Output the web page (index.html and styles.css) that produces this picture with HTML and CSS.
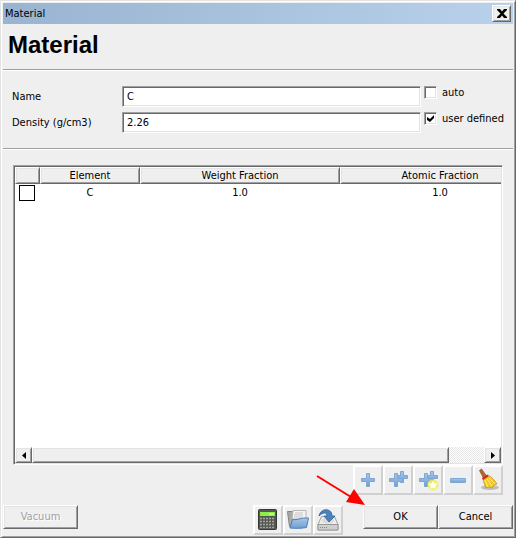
FILE: index.html
```html
<!DOCTYPE html>
<html lang="en">
<head>
<meta charset="utf-8">
<title>Material</title>
<link rel="stylesheet" href="styles.css">
</head>
<body>
<main class="dialog">
  <header class="titlebar">
    <span>Material</span>
    <button class="close" aria-label="Close"><svg width="10" height="9" viewBox="0 0 10 9"><path d="M0 0h3l2 2.500L7 0h3v1L6.500 4.500 10 8v1H7L5 6.500 3 9H0V8l3.500-3.500L0 1z"/></svg></button>
  </header>
  <h1>Material</h1>
  <hr>
  <form class="fields">
    <label class="caption" for="name">Name</label>
    <input class="text" id="name" type="text" value="C">
    <label class="option"><input class="check" type="checkbox"><span>auto</span></label>
    <label class="caption" for="density">Density (g/cm3)</label>
    <input class="text" id="density" type="text" value="2.26">
    <label class="option"><input class="check" type="checkbox" checked><span>user defined</span></label>
  </form>
  <hr>
  <section class="composition">
    <div class="list">
      <div class="viewport">
        <table>
          <colgroup><col class="c-check"><col class="c-element"><col class="c-fraction"><col class="c-fraction"></colgroup>
          <thead><tr><th></th><th>Element</th><th>Weight Fraction</th><th>Atomic Fraction</th></tr></thead>
          <tbody><tr><td class="pick"><input class="row-check" type="checkbox" aria-label="Select C"></td><td>C</td><td>1.0</td><td>1.0</td></tr></tbody>
        </table>
      </div>
      <div class="scrollbar">
        <button class="step" aria-label="Scroll left"><svg width="4" height="7" viewBox="0 0 4 7"><path d="M4 0v7L0 3.5z"/></svg></button>
        <div class="thumb"></div>
        <div class="track"></div>
        <button class="step" aria-label="Scroll right"><svg width="4" height="7" viewBox="0 0 4 7"><path d="M0 0v7L4 3.5z"/></svg></button>
      </div>
    </div>
    <div class="tools">
      <button class="tool" aria-label="Add"><svg width="24" height="24" viewBox="0 0 24 24"><use href="#plus"/></svg></button>
      <button class="tool" aria-label="Add several"><svg width="24" height="24" viewBox="0 0 24 24"><use href="#pluses"/></svg></button>
      <button class="tool" aria-label="Add special"><svg width="24" height="24" viewBox="0 0 24 24"><use href="#pluses"/><circle cx="17" cy="17" r="5.500" fill="#f3ee50" opacity=".85"/><path d="M17 12.500l1.500 2.900 3.200.4-2.400 2.200.6 3.200-2.900-1.600-2.900 1.600.6-3.200-2.400-2.200 3.200-.4z" fill="#fffff0"/></svg></button>
      <button class="tool" aria-label="Remove"><svg width="24" height="24" viewBox="0 0 24 24"><rect x="4.500" y="10.500" width="15" height="4" rx=".5" fill="url(#blue)" stroke="#7ba6d6"/></svg></button>
      <button class="tool" aria-label="Clear"><svg width="24" height="24" viewBox="0 0 24 24"><ellipse cx="14" cy="19.500" rx="9" ry="2.500" fill="#aaa" opacity=".7"/><path d="M3.500 2.500l2-1.500 5 7-3 2z" fill="#b5682b" stroke="#8b461d" stroke-width=".7"/><path d="M7 10l5-3c4 2 7 6 9 9l-3 1-2 3-3-1-3 1c-1-3-3-6-3-10z" fill="#efc72f" stroke="#c39710" stroke-width=".7"/><path d="M9 12l3 7M11 11l5 7M13 10l6 6" fill="none" stroke="#fff077"/><path d="M6 10l5.500-3.500 1 2L7 12z" fill="#cf2c1b"/></svg></button>
    </div>
  </section>
  <footer>
    <button class="push" disabled>Vacuum</button>
    <div class="files">
      <button class="tool" aria-label="Calculator"><svg width="24" height="24" viewBox="0 0 24 24"><rect x="2.500" y="1.500" width="18" height="20" rx="1" fill="#555850" stroke="#363833"/><rect x="4" y="4" width="15" height="4" fill="#8bed45"/><path d="M13 5h5v2h-5z" fill="#bcff82"/><path d="M4 10.500h15M4 13.500h15M4 16.500h15M4 19.500h15" stroke="#a2a59d" stroke-width="1.500" stroke-dasharray="2 1"/></svg></button>
      <button class="tool" aria-label="Open"><svg width="24" height="24" viewBox="0 0 24 24"><path d="M1.500 3.500h6l1 2h11v13h-16z" fill="#a9a9a6" stroke="#858585"/><path d="M6 11l1-8.500h13V11z" fill="#f4f4f4" stroke="#aaa" stroke-width=".8"/><path d="M9 5h8M8 7h9M8 9h9" stroke="#c5c5c5"/><path d="M6.500 11.500c5 1 8-2 16-1.500l-2 9.500c-6 1-10 1-16.500.5z" fill="url(#blue)" stroke="#4b7eb9"/></svg></button>
      <button class="tool" aria-label="Save"><svg width="24" height="24" viewBox="0 0 24 24"><path d="M5.500 8.500h13l3.500 8v5.500H2v-5.500z" fill="#ececea" stroke="#a0a09e"/><path d="M2 16.500h20v5.500H2z" fill="#cfcfcd" stroke="#999"/><ellipse cx="12" cy="12.500" rx="6" ry="3" fill="#dadada"/><path d="M4 19.500h8" stroke="#888" stroke-dasharray="1 1"/><path d="M3 8c1-5 5-7 9-6 3 1 4 3 4 6h3l-6 6-5-6h3c0-4-4-4-8 0z" fill="#4c83bb" stroke="#2e6199" stroke-width=".8"/></svg></button>
    </div>
    <div class="answers">
      <button class="push">OK</button>
      <button class="push">Cancel</button>
      <svg class="pointer" width="50" height="32" viewBox="0 0 50 32"><path d="M1 1l34 21" stroke="#f00" stroke-width="2"/><path d="M49 30L30 27l8-13z" fill="#f00"/></svg>
    </div>
  </footer>
</main>
<svg class="defs" width="0" height="0" aria-hidden="true">
  <defs>
    <linearGradient id="blue" x1="0" y1="0" x2="0" y2="1"><stop offset="0" stop-color="#a9c9ea"/><stop offset="1" stop-color="#6f9dd2"/></linearGradient>
    <path id="plus" d="M10.500 5.500h3v5h5v3h-5v5h-3v-5h-5v-3h5z" fill="url(#blue)" stroke="#7ba6d6"/>
    <g id="pluses"><path d="M14.500 3.500h3v4h4v3h-4v4h-3v-4h-4v-3h4z" fill="url(#blue)" stroke="#7ba6d6"/><path d="M8.500 5.500h3v5h5v3h-5v5h-3v-5h-5v-3h5z" fill="url(#blue)" stroke="#7ba6d6"/></g>
  </defs>
</svg>
</body>
</html>
```
FILE: styles.css
```css
* { box-sizing: border-box; }
body { margin: 0; background: #efefef; }
body, button, input { font: 11px/16px "DejaVu Sans Condensed", "Noto Sans", sans-serif; color: #000; }
button { padding: 0; background: #efefef; border-radius: 0; }
svg { display: block; flex: none; }
.defs { position: absolute; }

.dialog {
  min-height: 100vh;
  display: flex;
  flex-direction: column;
  padding: 2px;
  border: 1px solid;
  border-color: #e3e3e3 #696969 #696969 #e3e3e3;
  box-shadow: inset 1px 1px #fff, inset -1px -1px #a0a0a0;
}
.titlebar {
  height: 21px;
  display: flex;
  align-items: center;
  justify-content: space-between;
  padding: 0 2px;
  background: linear-gradient(90deg, #99b4d1, #b9d1ea);
}
.close {
  width: 19px;
  height: 17px;
  display: flex;
  align-items: center;
  justify-content: center;
}
.close, .push, .step, .thumb {
  background: #efefef;
  border: 1px solid;
  border-color: #fff #696969 #696969 #fff;
  box-shadow: inset 1px 1px #e3e3e3, inset -1px -1px #a0a0a0;
}
h1 {
  margin: 0;
  padding: 7px 5px 10px;
  font: bold 24px/28px "Liberation Sans", Arial, sans-serif;
}
hr {
  width: 100%;
  height: 2px;
  margin: 0;
  border: solid;
  border-width: 1px 0;
  border-color: #a0a0a0 transparent #fff;
}
.fields {
  display: grid;
  grid-template-columns: 110px 1fr 92px;
  grid-auto-rows: 20px;
  row-gap: 6px;
  padding: 15px 0 16px 9px;
}
.caption { padding-top: 3px; }
.text {
  width: 100%;
  height: 21px;
  padding: 0 4px;
  background: #fff;
}
.text, .check, .list {
  margin: 0;
  border: 1px solid;
  border-color: #a0a0a0 #fff #fff #a0a0a0;
  border-radius: 0;
  box-shadow: inset 1px 1px #696969, inset -1px -1px #e3e3e3;
}
.option {
  display: flex;
  gap: 5px;
  padding-left: 3px;
  white-space: nowrap;
  line-height: 14px;
}
.check {
  appearance: none;
  width: 13px;
  height: 13px;
  flex: none;
  background: #fff;
}
.check:checked::before {
  content: "";
  display: block;
  width: 7px;
  height: 7px;
  margin: 2px;
  background: #000;
  clip-path: polygon(0 28%, 43% 58%, 100% 0, 100% 43%, 43% 100%, 0 72%);
}

.composition {
  flex: 1;
  display: flex;
  flex-direction: column;
  padding: 15px 10px 0;
}
.list {
  flex: 1;
  display: flex;
  flex-direction: column;
  padding: 1px;
  background: #fff;
}
.viewport { flex: 1; overflow: hidden; }
table {
  width: 525px;
  table-layout: fixed;
  border-collapse: separate;
  border-spacing: 0;
}
.c-check { width: 25px; }
.c-element { width: 100px; }
.c-fraction { width: 200px; }
th, td { padding: 0; font-weight: normal; text-align: center; }
th {
  height: 17px;
  line-height: 15px;
  background: #efefef;
  border: 1px solid;
  border-color: #fff #696969 #696969 #fff;
  box-shadow: inset 1px 1px #e3e3e3, inset -1px -1px #a0a0a0;
}
td { height: 18px; }
.row-check {
  appearance: none;
  display: block;
  width: 16px;
  height: 16px;
  margin: 0 4px;
  border: 1px solid #000;
  background: #fff;
}
.scrollbar {
  height: 16px;
  display: flex;
}
.step {
  width: 17px;
  display: flex;
  align-items: center;
  justify-content: center;
}
.thumb { flex: 12; }
.track {
  flex: 1;
  background: repeating-conic-gradient(#fff 0 25%, #e6e6e6 0 50%) 0 0 / 2px 2px;
}

.tools { display: flex; justify-content: flex-end; }
.tool {
  width: 30px;
  height: 30px;
  display: flex;
  align-items: center;
  justify-content: center;
  border: 2px solid;
  border-color: #fff #d0d0d0 #d0d0d0 #fff;
}
footer {
  display: flex;
  align-items: flex-start;
  padding-top: 10px;
}
.push { width: 75px; height: 24px; }
.push:disabled { color: #a0a0a0; text-shadow: 1px 1px #fff; }
.files { display: flex; margin-left: auto; margin-right: 20px; }
.answers { position: relative; display: flex; }
.pointer {
  position: absolute;
  right: 147px;
  bottom: 22px;
}
```
